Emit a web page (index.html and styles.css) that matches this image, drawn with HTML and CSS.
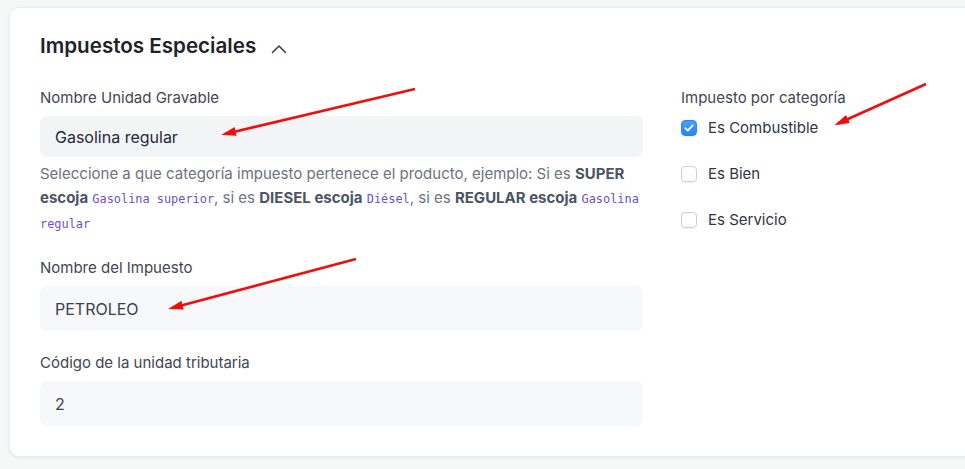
FILE: index.html
```html
<!DOCTYPE html>
<html lang="es">
<head>
<meta charset="utf-8">
<title>Impuestos Especiales</title>
<link rel="stylesheet" href="styles.css">
</head>
<body>
<div class="page">
  <section class="card">
    <header class="card-head">
      <h2 class="card-title">Impuestos Especiales</h2>
      <svg class="chevron" width="16" height="10" viewBox="0 0 16 10" aria-hidden="true">
        <path d="M1.5 8.5 L8 2 L14.5 8.5" fill="none" stroke="#374151" stroke-width="1.6" stroke-linecap="round" stroke-linejoin="round"/>
      </svg>
    </header>
    <div class="grid">
      <div class="col-left">
        <div class="field">
          <div class="label">Nombre Unidad Gravable</div>
          <div class="input input-first">Gasolina regular</div>
          <p class="help">Seleccione a que categoría impuesto pertenece el producto, ejemplo: Si es <b>SUPER escoja</b> <code>Gasolina superior</code>, si es <b>DIESEL escoja</b> <code>Diésel</code>, si es <b>REGULAR escoja</b> <code>Gasolina regular</code></p>
        </div>
        <div class="field">
          <div class="label">Nombre del Impuesto</div>
          <div class="input">PETROLEO</div>
        </div>
        <div class="field">
          <div class="label">Código de la unidad tributaria</div>
          <div class="input">2</div>
        </div>
      </div>
      <div class="col-right">
        <div class="label">Impuesto por categoría</div>
        <div class="checks">
          <div class="check">
            <span class="box box-checked">
              <svg width="10" height="8" viewBox="0 0 10 8" aria-hidden="true"><path d="M1.3 4.2 L3.8 6.6 L8.7 1.4" fill="none" stroke="#fff" stroke-width="1.7" stroke-linecap="round" stroke-linejoin="round"/></svg>
            </span>
            <span class="check-text">Es Combustible</span>
          </div>
          <div class="check">
            <span class="box"></span>
            <span class="check-text">Es Bien</span>
          </div>
          <div class="check">
            <span class="box"></span>
            <span class="check-text">Es Servicio</span>
          </div>
        </div>
      </div>
    </div>
  </section>
  <svg class="annotations" width="965" height="469" viewBox="0 0 965 469" aria-hidden="true">
    <defs>
      <marker id="ah" markerUnits="userSpaceOnUse" markerWidth="15" markerHeight="9" viewBox="0 0 15 9" refX="11" refY="4.5" orient="auto">
        <path d="M0 0 L15 4.5 L0 9 Z" fill="#f20d0d"/>
      </marker>
    </defs>
    <line x1="415" y1="89" x2="225" y2="134" stroke="#f20d0d" stroke-width="2.6" marker-end="url(#ah)"/>
    <line x1="926" y1="84" x2="838" y2="123.5" stroke="#f20d0d" stroke-width="2.6" marker-end="url(#ah)"/>
    <line x1="356" y1="259" x2="172" y2="308" stroke="#f20d0d" stroke-width="2.6" marker-end="url(#ah)"/>
  </svg>
</div>
</body>
</html>
```
FILE: styles.css
```css
html, body {
  margin: 0;
  padding: 0;
}
body {
  background: #f6f7f7;
  font-family: Inter, "Noto Sans", Arial, sans-serif;
  color: #1f2328;
  overflow: hidden;
}
.page {
  position: relative;
  width: 965px;
  height: 469px;
  padding: 7px 0 0 9px;
  box-sizing: border-box;
  overflow: hidden;
}
.card {
  width: 1000px;
  box-sizing: border-box;
  background: #fff;
  border: 1px solid #eceeef;
  border-radius: 10px;
  box-shadow: 0 1px 3px rgba(0, 0, 0, 0.07);
  padding: 24px 0 30px 30px;
}
.card-head {
  display: flex;
  align-items: center;
  gap: 15px;
  height: 28px;
}
.card-title {
  margin: 0;
  font-size: 20.6px;
  line-height: 28px;
  font-weight: 600;
  color: #1f2328;
}
.chevron {
  margin-top: 5px;
}
.grid {
  display: grid;
  grid-template-columns: 603px 1fr;
  column-gap: 38px;
  margin-top: 28px;
}
.label {
  font-size: 15px;
  line-height: 20px;
  color: #3f4650;
}
.field + .field {
  margin-top: 22px;
}
.input {
  margin-top: 8px;
  height: 45px;
  box-sizing: border-box;
  padding: 0 15px;
  display: flex;
  align-items: center;
  background: #f7f8f9;
  border-radius: 7px;
  font-size: 16px;
  color: #3a414b;
}
.input-first {
  height: 41px;
  background: #f3f4f6;
  color: #1f2937;
}
.help {
  margin: 5px 0 0;
  font-size: 15px;
  line-height: 24px;
  color: #6b7280;
}
.help b {
  font-weight: 700;
  color: #4b5563;
}
.help code {
  font-family: "DejaVu Sans Mono", "Liberation Mono", monospace;
  font-size: 11.9px;
  color: #6a4fd3;
}
.checks {
  margin-top: 8px;
  display: flex;
  flex-direction: column;
  gap: 22px;
}
.check {
  display: flex;
  align-items: center;
  height: 24px;
  gap: 11px;
}
.box {
  width: 16px;
  height: 16px;
  box-sizing: border-box;
  border: 1px solid #cdd1d6;
  border-radius: 4px;
  background: #fff;
  box-shadow: 0 1px 1px rgba(0, 0, 0, 0.05);
  display: flex;
  align-items: center;
  justify-content: center;
}
.box-checked {
  border-color: #2b86ee;
  background: linear-gradient(#4a9ff5, #2a85ed);
}
.check-text {
  font-size: 15px;
  line-height: 24px;
  color: #2f3640;
}
.annotations {
  position: absolute;
  left: 0;
  top: 0;
  pointer-events: none;
}
```
